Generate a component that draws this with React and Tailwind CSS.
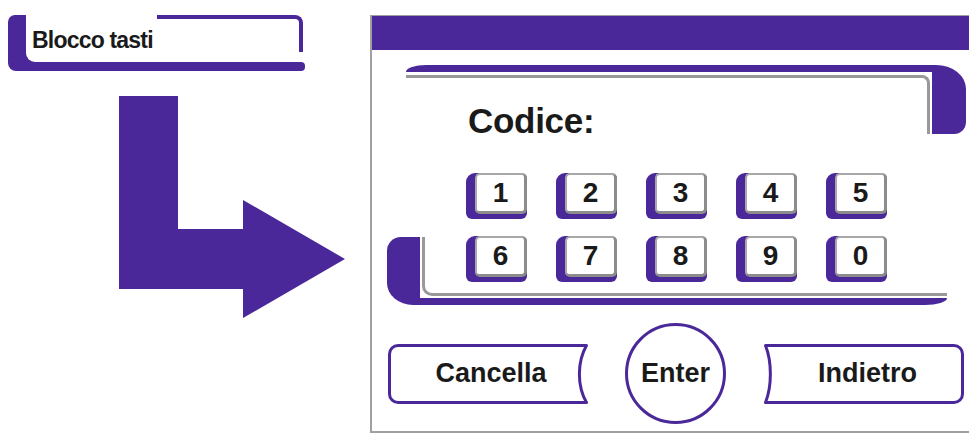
import React from "react";

const P = "bg-[#4b289a]";

function Key({ d }) {
  return (
    <div className="w-[61px] h-[46px] bg-[#4b289a] rounded-tl-[9px] rounded-bl-[6px] rounded-r-[6px] pl-[9px] pb-[5px]">
      <div className="h-full bg-white border-2 border-t-[#a8a8a8] border-l-[#a8a8a8] border-r-[3px] border-b-[3px] border-r-[#8c8c8c] border-b-[#8c8c8c] rounded-[5px] flex items-center justify-center text-[28px] font-bold leading-none text-[#1a1a1a]">
        {d}
      </div>
    </div>
  );
}

export default function App() {
  return (
    <div className="w-[969px] h-[441px] bg-white overflow-hidden flex font-['Liberation_Sans',Arial,sans-serif] text-[#1a1a1a]">
      {/* Left column */}
      <div className="w-[370px] shrink-0 flex flex-col">
        <div className="ml-2 mt-[15px] w-[297px] h-[56px] flex flex-col">
          <div className="flex h-[47px]">
            <div className={`w-[18px] ${P} rounded-tl-[7px]`} />
            <div className={`flex-1 ${P}`}>
              <div className="h-full bg-white rounded-bl-[9px] flex items-start">
                <div className="pl-[6px] pt-[14px] text-[23px] leading-none font-bold tracking-[-0.8px] whitespace-nowrap">
                  Blocco tasti
                </div>
                <div className="ml-auto mr-[2px] w-[146px] h-[37px] border-t-4 border-r-4 border-[#4b289a] rounded-tr-[8px]" />
              </div>
            </div>
          </div>
          <div className={`h-[9px] ${P} rounded-bl-[8px] rounded-r-[4px]`} />
        </div>
        <svg width="226" height="222" viewBox="0 0 226 222" className="block ml-[119px] mt-[25px]">
          <polygon points="0,0 59,0 59,133 124,133 124,104 226,163 124,222 124,193 0,193" fill="#4b289a" />
        </svg>
      </div>

      {/* Right panel */}
      <div className="flex-1 min-w-0 mt-[15px] h-[418px] border-l-2 border-t border-b-2 border-[#a0a0a0] flex flex-col">
        <div className={`h-[34px] shrink-0 ${P}`} />

        {/* Codice frame */}
        <div className="ml-[34px] mt-[15px] w-[560px] h-[69px] shrink-0 bg-[#4b289a] pt-[7px] pr-[34px] rounded-tl-[20px_7px] rounded-tr-[30px_24px] rounded-br-[12px] flex">
          <div className="flex-1 bg-white pt-[3px] pr-[2px] flex">
            <div className="flex-1 border-t-[3px] border-r-[3px] border-[#999999] rounded-tr-[8px] pl-[62px] pt-[25px]">
              <div className="text-[35px] leading-none font-bold tracking-[-0.3px] whitespace-nowrap">Codice:</div>
            </div>
          </div>
        </div>

        {/* Row 1 */}
        <div className="ml-[94px] mt-[39px] flex gap-[29px] shrink-0">
          {["1", "2", "3", "4", "5"].map((d) => (
            <Key key={d} d={d} />
          ))}
        </div>

        {/* Bottom frame with row 2 */}
        <div className="ml-[15px] mt-[18px] w-[560px] h-[68px] shrink-0 bg-[#4b289a] pl-[33px] pb-[7px] rounded-tl-[14px] rounded-bl-[26px_22px] rounded-br-[22px_7px] flex">
          <div className="flex-1 bg-white pl-[2px] pb-[2px] flex">
            <div className="flex-1 border-l-[3px] border-b-[3px] border-[#999999] rounded-bl-[10px] pl-[41px]">
              <div className="-mt-px flex gap-[29px]">
                {["6", "7", "8", "9", "0"].map((d) => (
                  <Key key={d} d={d} />
                ))}
              </div>
            </div>
          </div>
        </div>

        {/* Buttons */}
        <div className="ml-[16px] mt-[18px] flex items-center shrink-0">
          <div className="w-[200px] h-[60px] flex">
            <div className="flex-1 border-y-[3px] border-l-[3px] border-[#4b289a] rounded-l-[10px] pl-[17px] flex items-center justify-center text-[27px] font-bold leading-none">
              Cancella
            </div>
            <svg width="14" height="60" viewBox="0 0 14 60" className="block">
              <path d="M0 1.5 H12.5 C3 18, 3 42, 12.5 58.5 H0" fill="none" stroke="#4b289a" strokeWidth="3" strokeLinejoin="round" />
            </svg>
          </div>
          <div className="ml-[37px] w-[101px] h-[101px] rounded-full border-[3px] border-[#4b289a] flex items-center justify-center text-[27px] font-bold leading-none">
            Enter
          </div>
          <div className="ml-[38px] w-[200px] h-[60px] flex">
            <svg width="10" height="60" viewBox="0 0 10 60" className="block">
              <path d="M10 1.5 H1.5 C8 18, 8 42, 1.5 58.5 H10" fill="none" stroke="#4b289a" strokeWidth="3" strokeLinejoin="round" />
            </svg>
            <div className="flex-1 border-y-[3px] border-r-[3px] border-[#4b289a] rounded-r-[10px] flex items-center justify-center text-[27px] font-bold leading-none">
              Indietro
            </div>
          </div>
        </div>
      </div>
    </div>
  );
}
